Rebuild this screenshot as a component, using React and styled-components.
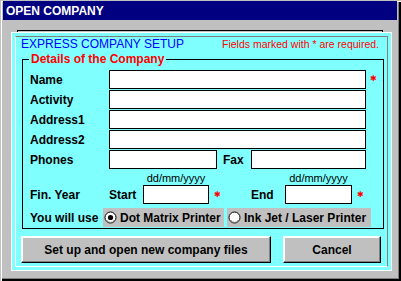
import React from 'react';
import styled, { createGlobalStyle } from 'styled-components';

const GlobalStyle = createGlobalStyle`
  html, body {
    margin: 0;
    padding: 0;
    background: #c0c0c0;
  }
  body {
    font-family: 'Liberation Sans', Arial, sans-serif;
  }
`;

const Window = styled.div`
  width: 401px;
  height: 281px;
  box-sizing: border-box;
  padding: 1px 4px 0 3px;
  background: #c0c0c0;
  box-shadow: inset 1px 1px #c0c0c0, inset 2px 2px #fff, inset -1px -1px #000,
    inset -2px -2px #000, inset -3px -3px #808080;
  overflow: hidden;
`;

const TitleBar = styled.div`
  height: 19px;
  background: #000080;
  color: #fff;
  font-size: 12px;
  font-weight: bold;
  line-height: 20px;
  padding-left: 3px;
`;

const SheetEdge = styled.div`
  margin: 10px 0 0 14px;
  width: 366px;
  height: 2px;
  box-sizing: border-box;
  border: 1px solid #000;
  border-bottom: none;
`;

const Panel = styled.div`
  margin-left: 8px;
  width: 381px;
  box-sizing: border-box;
  padding: 3px;
  background: #80ffff;
  border: 1px solid #fff;
`;

const InnerFrame = styled.div`
  border: 1px solid;
  border-color: #808080 #808080 #fff #fff;
  padding-bottom: 3px;
`;

const Header = styled.div`
  display: flex;
  align-items: baseline;
  justify-content: space-between;
  height: 14px;
  line-height: 14px;
  padding: 0 8px 0 5px;
`;

const Heading = styled.span`
  color: #0000ff;
  font-size: 12px;
`;

const Note = styled.span`
  color: #ff0000;
  font-size: 10.5px;
`;

const Group = styled.fieldset`
  margin: 1px 3px 0 6px;
  padding: 3px 0 1px;
  border: 1px solid #000;
  min-width: 0;
  display: flex;
  flex-direction: column;
  gap: 1px;
`;

const Legend = styled.legend`
  margin-left: 6px;
  padding: 0 2px;
  color: #ff0000;
  font-size: 12px;
  font-weight: bold;
  line-height: 14px;
`;

const Row = styled.div`
  display: flex;
  align-items: ${(p) => p.$align || 'center'};
  padding-left: 7px;
  margin-top: ${(p) => p.$top || 0}px;
`;

const Label = styled.span`
  width: ${(p) => p.$w || 79}px;
  flex-shrink: 0;
  height: 19px;
  line-height: 20px;
  font-size: 12px;
  font-weight: bold;
  color: #000;
  margin-left: ${(p) => p.$ml || 0}px;
`;

const Field = styled.div`
  width: ${(p) => p.$w}px;
  height: 19px;
  box-sizing: border-box;
  background: #fff;
  border: 1px solid #000;
  flex-shrink: 0;
`;

const Star = styled.span`
  color: #ff0000;
  font-family: 'DejaVu Sans', sans-serif;
  font-size: 8px;
  line-height: 20px;
  margin-left: 4px;
`;

const DateGroup = styled.div`
  display: grid;
  grid-template-columns: 34px ${(p) => p.$w}px 1fr;
  grid-template-rows: 14px 19px;
  grid-template-areas:
    '. hint .'
    'label field star';
  row-gap: 1px;
  width: ${(p) => p.$span}px;
`;

const Hint = styled.span`
  grid-area: hint;
  text-align: center;
  font-size: 11px;
  line-height: 14px;
  padding-top: 1px;
  color: #000;
  white-space: nowrap;
`;

const DateLabel = styled(Label)`
  grid-area: label;
`;

const DateField = styled(Field)`
  grid-area: field;
`;

const DateStar = styled(Star)`
  grid-area: star;
  margin-left: 5px;
`;

const Choice = styled.label`
  display: flex;
  align-items: center;
  height: 19px;
  width: ${(p) => p.$w}px;
  background: #c0c0c0;
  margin-right: 3px;
  padding-left: 1px;
  box-sizing: border-box;
  font-size: 12px;
  font-weight: bold;
  color: #000;
  white-space: nowrap;
`;

const RadioMark = styled.svg`
  width: 13px;
  height: 13px;
  margin-right: 3px;
  flex-shrink: 0;
`;

const Buttons = styled.div`
  display: flex;
  gap: 12px;
  padding-left: 5px;
  margin-top: 7px;
`;

const Button = styled.button`
  width: ${(p) => p.$w}px;
  height: 27px;
  box-sizing: border-box;
  background: #c0c0c0;
  border: 1px solid;
  border-color: #fff #000 #000 #fff;
  box-shadow: inset -1px -1px #808080, inset 1px 1px #fff;
  font-family: 'Liberation Sans', Arial, sans-serif;
  font-size: 12px;
  font-weight: bold;
  color: #000;
  padding: 0;
`;

const Radio = ({ checked }) => (
  <RadioMark viewBox="0 0 13 13">
    <circle cx="6.5" cy="6.5" r="5.5" fill="#fff" stroke="#000" strokeWidth="1" />
    <path d="M3 9.5 A4.2 4.2 0 0 0 10 9.5" fill="none" stroke="#808080" strokeWidth="1" />
    {checked && <circle cx="6.5" cy="6.5" r="2.6" fill="#000" />}
  </RadioMark>
);

const lines = ['Name', 'Activity', 'Address1', 'Address2'];

export default function App() {
  return (
    <>
      <GlobalStyle />
      <Window>
        <TitleBar>OPEN COMPANY</TitleBar>
        <SheetEdge />
        <Panel>
          <InnerFrame>
            <Header>
              <Heading>EXPRESS COMPANY SETUP</Heading>
              <Note>Fields marked with * are required.</Note>
            </Header>
            <Group>
              <Legend>Details of the Company</Legend>
              {lines.map((name) => (
                <Row key={name}>
                  <Label>{name}</Label>
                  <Field $w={257} />
                  {name === 'Name' && <Star>✱</Star>}
                </Row>
              ))}
              <Row>
                <Label>Phones</Label>
                <Field $w={108} />
                <Label $w={28} $ml={6}>Fax</Label>
                <Field $w={115} />
              </Row>
              <Row $align="flex-end">
                <Label>Fin. Year</Label>
                <DateGroup $w={66} $span={142}>
                  <Hint>dd/mm/yyyy</Hint>
                  <DateLabel $w={34}>Start</DateLabel>
                  <DateField $w={66} />
                  <DateStar>✱</DateStar>
                </DateGroup>
                <DateGroup $w={67} $span={90}>
                  <Hint>dd/mm/yyyy</Hint>
                  <DateLabel $w={34}>End</DateLabel>
                  <DateField $w={67} />
                  <DateStar>✱</DateStar>
                </DateGroup>
              </Row>
              <Row $top={3}>
                <Label $w={73}>You will use</Label>
                <Choice $w={121}>
                  <Radio checked />
                  Dot Matrix Printer
                </Choice>
                <Choice $w={144}>
                  <Radio />
                  Ink Jet / Laser Printer
                </Choice>
              </Row>
            </Group>
            <Buttons>
              <Button $w={250}>Set up and open new company files</Button>
              <Button $w={98}>Cancel</Button>
            </Buttons>
          </InnerFrame>
        </Panel>
      </Window>
    </>
  );
}
